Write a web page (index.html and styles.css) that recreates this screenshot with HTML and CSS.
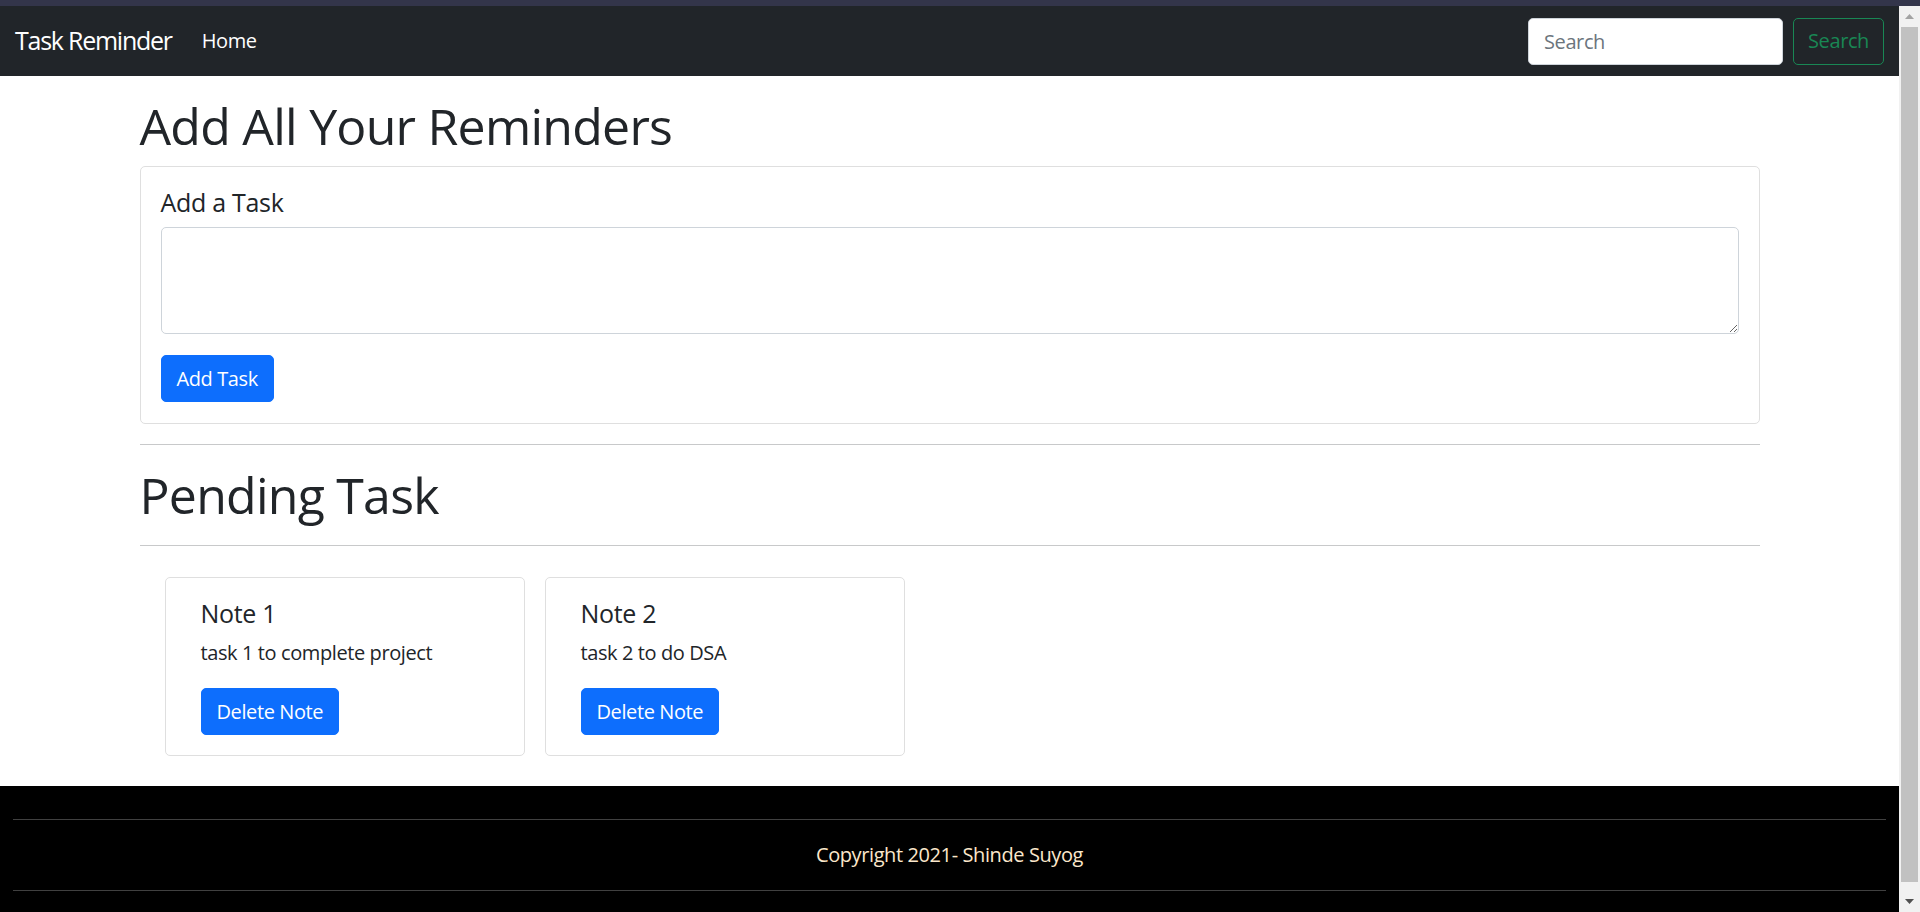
FILE: index.html
```html
<!DOCTYPE html>
<html lang="en">
<head>
<meta charset="utf-8">
<title>Task Reminder</title>
<link rel="stylesheet" href="styles.css">
</head>
<body>
<div class="chrome-strip"></div>
<div class="window">
  <div class="page">
    <nav class="navbar">
      <div class="nav-left">
        <a class="brand" href="#">Task Reminder</a>
        <a class="nav-link" href="#">Home</a>
      </div>
      <form class="search-form">
        <input class="search-input" type="search" placeholder="Search">
        <button class="btn btn-outline-success" type="button">Search</button>
      </form>
    </nav>

    <main class="container">
      <h1 class="page-title">Add All Your Reminders</h1>
      <div class="card">
        <div class="card-body">
          <h5 class="card-title">Add a Task</h5>
          <textarea class="task-input" rows="3"></textarea>
          <button class="btn btn-primary" type="button">Add Task</button>
        </div>
      </div>
      <hr class="divider">
      <h1 class="page-title">Pending Task</h1>
      <hr class="divider">
      <div class="notes">
        <div class="card note-card">
          <div class="note-body">
            <h5 class="card-title">Note 1</h5>
            <p class="card-text">task 1 to complete project</p>
            <button class="btn btn-primary" type="button">Delete Note</button>
          </div>
        </div>
        <div class="card note-card">
          <div class="note-body">
            <h5 class="card-title">Note 2</h5>
            <p class="card-text">task 2 to do DSA</p>
            <button class="btn btn-primary" type="button">Delete Note</button>
          </div>
        </div>
      </div>
    </main>

    <footer class="footer">
      <hr class="footer-rule">
      <p class="copyright">Copyright 2021- Shinde Suyog</p>
      <hr class="footer-rule">
    </footer>
  </div>

  <div class="scrollbar">
    <div class="sb-button">
      <svg width="9" height="5" viewBox="0 0 9 5"><polygon points="0,5 4.5,0 9,5" fill="#a3a3a3"/></svg>
    </div>
    <div class="sb-thumb"></div>
    <div class="sb-track"></div>
    <div class="sb-button">
      <svg width="9" height="5" viewBox="0 0 9 5"><polygon points="0,0 9,0 4.5,5" fill="#505050"/></svg>
    </div>
  </div>
</div>
</body>
</html>
```

FILE: styles.css
```css
* {
  box-sizing: border-box;
}

html, body {
  margin: 0;
  padding: 0;
}

body {
  width: 1920px;
  height: 912px;
  overflow: hidden;
  font-family: "Open Sans", "Noto Sans", sans-serif;
  font-size: 20px;
  line-height: 1.5;
  color: #212529;
  letter-spacing: -0.4px;
  background: #fff;
}

.chrome-strip {
  height: 6px;
  background: #33354a;
}

.window {
  display: flex;
  height: 906px;
}

.page {
  flex: 1;
  overflow: hidden;
  background: #fff;
}

/* navbar */
.navbar {
  height: 70px;
  background: #212529;
  padding: 10px 15px;
  display: flex;
  align-items: center;
  justify-content: space-between;
}

.nav-left {
  display: flex;
  align-items: center;
}

.brand {
  font-size: 25px;
  line-height: 1.5;
  letter-spacing: -1.25px;
  padding: 6px 0;
  margin-right: 20px;
  color: #fff;
  text-decoration: none;
}

.nav-link {
  font-size: 20px;
  line-height: 1.5;
  padding: 10px;
  color: #fff;
  text-decoration: none;
}

.search-form {
  display: flex;
  align-items: center;
}

.search-input {
  width: 255px;
  height: 47px;
  padding: 7px 15px;
  font-family: inherit;
  font-size: 20px;
  letter-spacing: -0.4px;
  color: #212529;
  background: #fff;
  border: 1px solid #ced4da;
  border-radius: 5px;
  margin-right: 10px;
  outline: none;
}

.search-input::placeholder {
  color: #6c757d;
}

.btn {
  font-family: inherit;
  font-size: 20px;
  line-height: 1.5;
  letter-spacing: -0.4px;
  padding: 7.5px 15px;
  border-radius: 5px;
  border: 1px solid transparent;
  height: 47px;
  cursor: pointer;
}

.btn-outline-success {
  color: #198754;
  border-color: #198754;
  background: transparent;
  width: 91px;
  padding: 7.5px 0;
}

.btn-primary {
  color: #fff;
  background: #0d6efd;
  border-color: #0d6efd;
}

/* main */
.container {
  max-width: 1650px;
  margin: 20px auto 20px;
  padding: 0 15px;
}

.page-title {
  font-size: 50px;
  font-weight: 400;
  line-height: 1.2;
  letter-spacing: -0.75px;
  margin: 0 0 10px;
}

.card {
  border: 1px solid #dfdfdf;
  border-radius: 5px;
  background: #fff;
}

.card-body {
  padding: 20px 20px 21px;
}

.card-title {
  font-size: 25px;
  font-weight: 400;
  line-height: 1.2;
  letter-spacing: -0.3px;
  margin: 0 0 10px;
}

.task-input {
  display: block;
  width: 100%;
  height: 107px;
  padding: 7.5px 15px;
  font-family: inherit;
  font-size: 20px;
  border: 1px solid #ced4da;
  border-radius: 5px;
  margin: 0 0 21px;
}

.divider {
  border: 0;
  height: 1px;
  background: #c8c9ca;
  margin: 20px 0;
}

.notes {
  display: flex;
  padding: 1px 0 0 15px;
}

.note-card {
  width: 360px;
  margin: 10px;
}

.note-body {
  padding: 20px 35px;
}

.card-text {
  margin: 0 0 20px;
}

/* footer */
.footer {
  background: #000;
  padding: 13px 13px 40px;
}

.footer-rule {
  border: 0;
  height: 1px;
  background: #404040;
  margin: 20px 0;
}

.copyright {
  margin: 0;
  text-align: center;
  color: #fbe7cb;
}

/* scrollbar */
.scrollbar {
  width: 21px;
  background: #f1f1f1;
  display: flex;
  flex-direction: column;
}

.sb-button {
  height: 21px;
  display: flex;
  align-items: center;
  justify-content: center;
}

.sb-button svg {
  display: block;
}

.sb-thumb {
  height: 855px;
  margin: 0 2px;
  background: #c1c1c1;
}

.sb-track {
  flex: 1;
}
```
